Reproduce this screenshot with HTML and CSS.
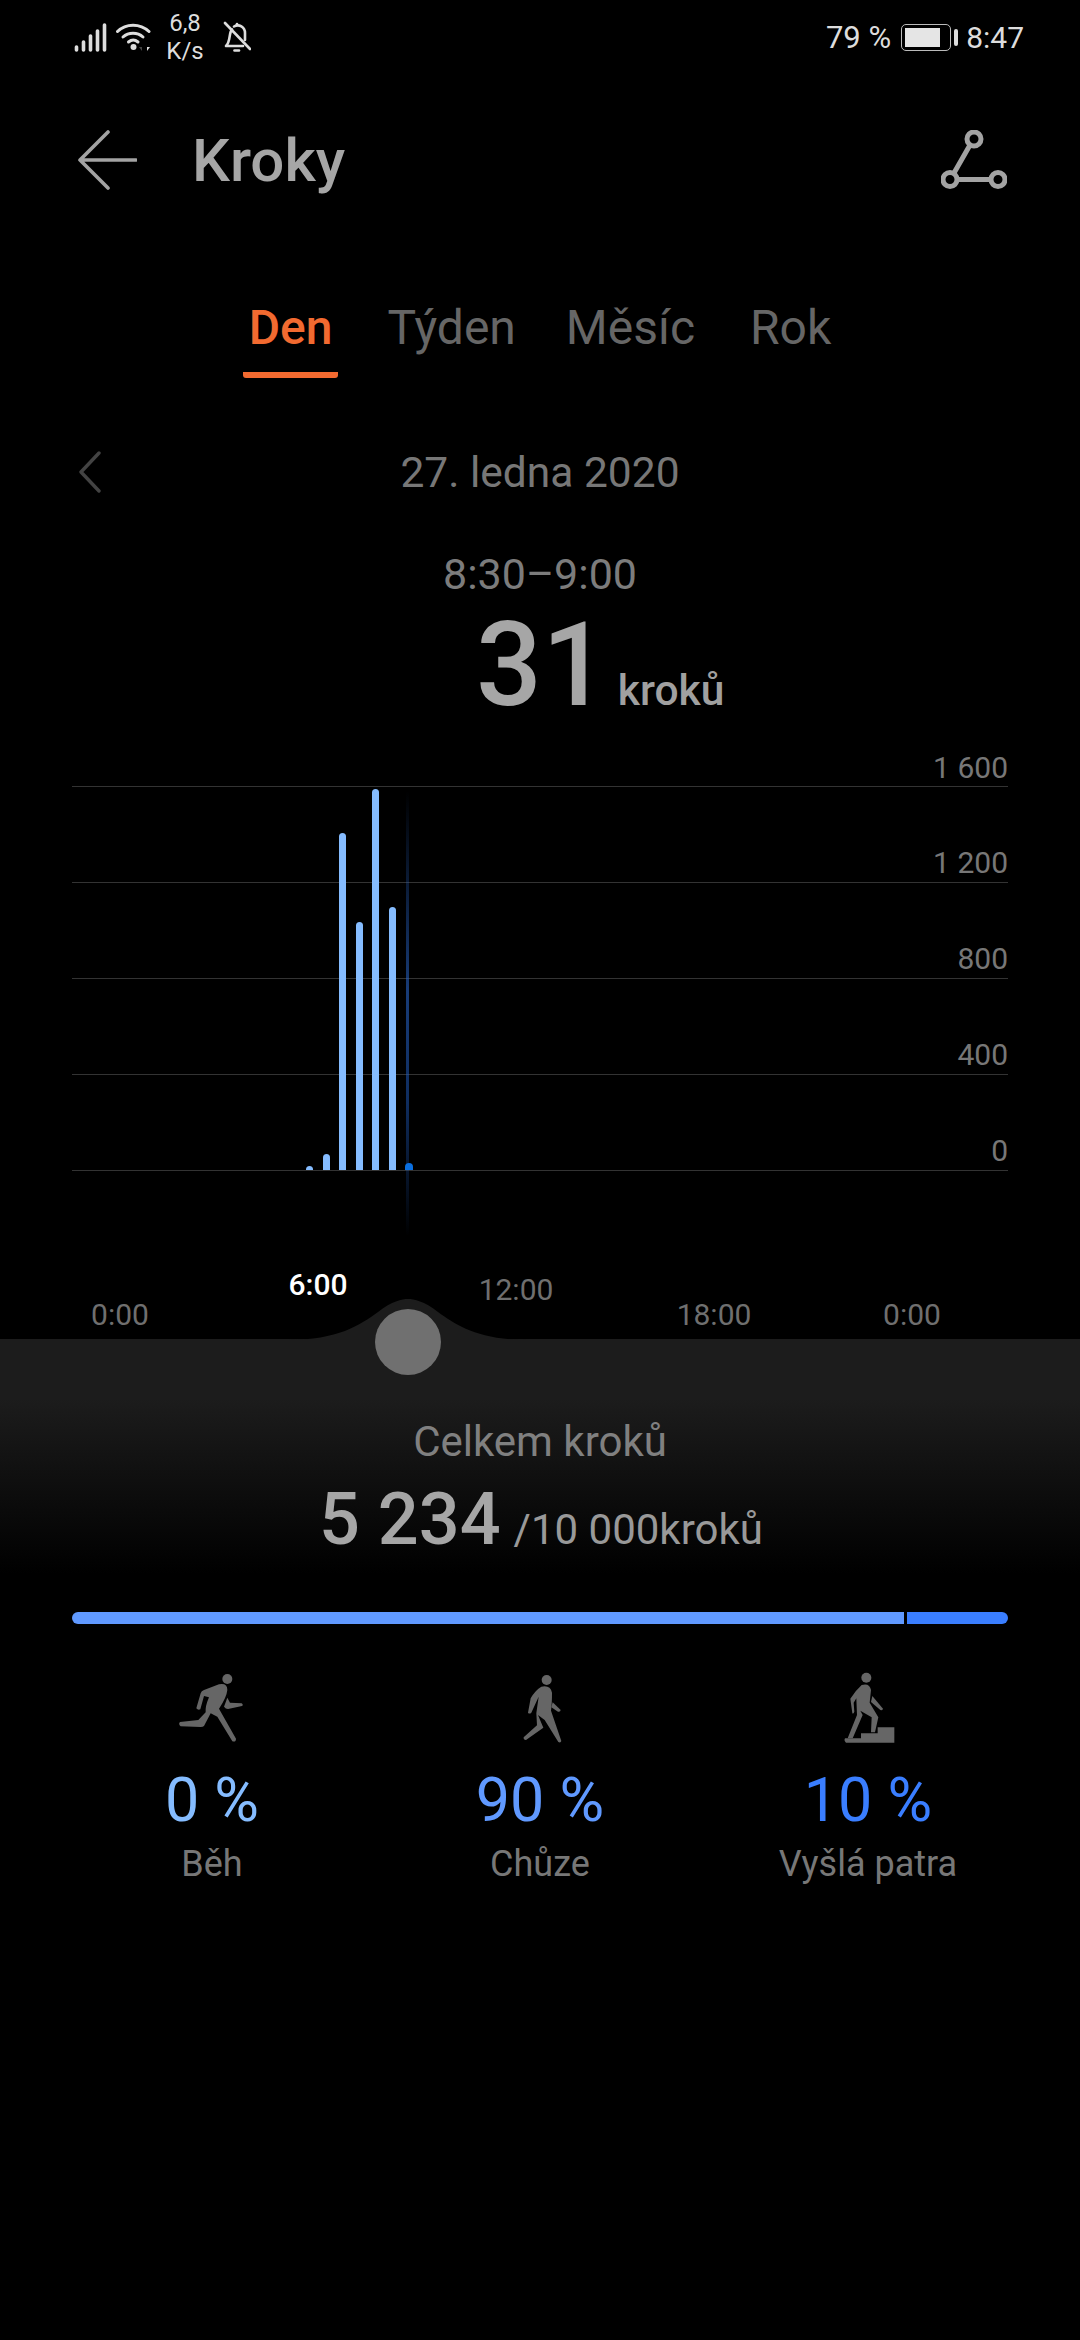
FILE: index.html
```html
<!DOCTYPE html>
<html lang="cs">
<head>
  <meta charset="UTF-8">
  <meta name="viewport" content="width=device-width, initial-scale=1.0">
  <title>Kroky</title>
  <link rel="stylesheet" href="styles.css">
</head>
<body>
  <!-- Status bar -->
  <div class="status-bar">
    <div class="status-left">
      <svg class="icon-signal" width="34" height="32" viewBox="0 0 34 32">
        <g fill="none" stroke="#ddd" stroke-width="3.6" stroke-linecap="round">
          <path d="M2.5 29v-3"/><path d="M9.5 29v-8"/><path d="M16.5 29v-14"/><path d="M23.5 29v-19"/><path d="M30.5 29v-25"/>
        </g>
      </svg>
      <svg class="icon-wifi" width="36" height="32" viewBox="0 0 36 32">
        <g fill="none" stroke="#ddd" stroke-width="3" stroke-linecap="round">
          <path d="M1.5 10.5C10 2 24 2 33 10.5"/>
          <path d="M7 16C12.500 11 21.500 11 27 16"/>
          <path d="M12.500 21C15.500 18.500 19 18.500 22 21"/>
        </g>
        <circle cx="17.500" cy="26" r="3" fill="#ddd"/>
        <path d="M31 21v5h3l-3 4z" fill="#ddd"/>
        <path d="M26 21v5h-3l3 4z" fill="#444"/>
      </svg>
      <div class="net-speed"><span>6,8</span><span>K/s</span></div>
      <svg class="icon-bell" width="28" height="32" viewBox="0 0 28 32">
        <g fill="none" stroke="#ddd" stroke-width="2.600" stroke-linecap="round" stroke-linejoin="round">
          <path d="M9 8.500C5.500 12 8 20 3 25H20"/>
          <path d="M11 5.500C16 2.500 22 6 22 12V19"/>
          <path d="M14 4V3"/>
          <path d="M2 2L27 28"/>
          <path d="M11.500 29.500H16"/>
        </g>
      </svg>
    </div>
    <div class="status-right">
      <span class="battery-text">79 %</span>
      <div class="battery"><div class="battery-level"></div></div>
      <div class="battery-nub"></div>
      <span class="clock">8:47</span>
    </div>
  </div>

  <!-- Title -->
  <div class="title-bar">
    <svg width="60" height="62" viewBox="0 0 60 62">
      <path d="M31 3L3 31L31 59M3 31H59" fill="none" stroke="#a3a3a3" stroke-width="3.600" stroke-linecap="round" stroke-linejoin="round"/>
    </svg>
    <h1 class="title">Kroky</h1>
    <svg class="icon-route" width="66" height="60" viewBox="0 0 66 60">
      <g fill="none" stroke="#a3a3a3" stroke-width="5">
        <circle cx="33" cy="9" r="7"/>
        <circle cx="9" cy="49.500" r="7"/>
        <circle cx="57" cy="49.500" r="7"/>
        <path d="M29 15L13 43M16 49.500H50"/>
      </g>
    </svg>
  </div>

  <!-- Tabs -->
  <div class="tabs">
    <div class="tab active">Den</div>
    <div class="tab">Týden</div>
    <div class="tab month">Měsíc</div>
    <div class="tab">Rok</div>
  </div>

  <div class="date-row">
    <svg width="26" height="42" viewBox="0 0 26 42">
      <path d="M22 2L4 21L22 40" fill="none" stroke="#434343" stroke-width="3.400" stroke-linecap="round" stroke-linejoin="round"/>
    </svg>
    <div class="date">27. ledna 2020</div>
  </div>

  <div class="range">8:30–9:00</div>
  <div class="steps"><span class="steps-num">31</span><span class="steps-unit">kroků</span></div>

  <!-- Chart -->
  <div class="chart">
    <div class="grid-row first">1 600</div>
    <div class="grid-row">1 200</div>
    <div class="grid-row">800</div>
    <div class="grid-row">400</div>
    <div class="grid-row">0</div>
    <div class="cursor-line"></div>
    <div class="bars">
      <div class="bar" style="height:4px"></div>
      <div class="bar" style="height:16px"></div>
      <div class="bar" style="height:337px"></div>
      <div class="bar" style="height:248px"></div>
      <div class="bar" style="height:381px"></div>
      <div class="bar" style="height:263px"></div>
      <div class="bar now" style="height:7px"></div>
    </div>
  </div>

  <div class="axis">
    <span>0:00</span>
    <span class="raised current">6:00</span>
    <span class="raised">12:00</span>
    <span>18:00</span>
    <span>0:00</span>
  </div>

  <!-- Bottom panel -->
  <div class="panel">
    <svg class="bump" width="240" height="44" viewBox="0 0 240 44">
      <path d="M0 44C50 44 72 29 90 16C104 5 114 3 120 3C126 3 136 5 150 16C168 29 190 44 240 44Z" fill="#1c1c1c"/>
    </svg>
    <div class="thumb"></div>

    <div class="total-label">Celkem kroků</div>
    <div class="total"><span class="total-num">5 234</span><span class="total-goal">/10 000kroků</span></div>

    <div class="progress">
      <div class="progress-walk"></div>
      <div class="progress-climb"></div>
    </div>

    <div class="stats">
      <div class="stat">
        <svg width="130" height="100" viewBox="-36 0 390 300">
          <circle cx="205" cy="57" r="15" fill="#666"/>
          <path fill="#666" d="M112 145L125 100Q127 93 135 90L180 73Q205 68 205 90Q203 112 180 146L231 236Q231 247 220 244L175 170L155 160L135 198Q132 201 125 201L65 199Q57 192 63 186L118 180L140 157Q138 140 150 112L135 108L124 148Q117 152 112 145Z"/>
          <path fill="#666" d="M205 113L213 128L248 130Q254 135 249 138L207 147Q200 147 195 140Z"/>
        </svg>
        <div class="stat-value run">0 %</div>
        <div class="stat-label">Běh</div>
      </div>
      <div class="stat">
        <svg width="100" height="100" viewBox="-36 0 300 300">
          <circle cx="134" cy="60" r="15" fill="#666"/>
          <path fill="#666" d="M78 158L86 115Q100 90 118 80Q145 74 150 98Q150 130 147 152L178 243Q176 250 169 246L128 180L108 165L124 203L72 240Q64 240 65 232L105 196L103 160L110 110L88 158Q82 163 78 158Z"/>
          <path fill="#666" d="M152 127L176 150Q175 157 168 155L148 142Z"/>
        </svg>
        <div class="stat-value walk">90 %</div>
        <div class="stat-label">Chůze</div>
      </div>
      <div class="stat">
        <svg width="100" height="100" viewBox="-9 0 300 300">
          <circle cx="136" cy="53" r="15" fill="#666"/>
          <path fill="#666" d="M94 160L88 116Q105 90 122 75Q146 68 150 90L146 128L172 172L162 217H150L152 172L118 152L125 165L95 235H80L108 165L106 115L98 128L100 155Q97 163 94 160Z"/>
          <path fill="#666" d="M154 108L186 146Q184 152 178 150L150 126Z"/>
          <path fill="#666" d="M72 235H120V220H170V202H220V248H75Q68 242 72 235Z"/>
        </svg>
        <div class="stat-value climb">10 %</div>
        <div class="stat-label">Vyšlá patra</div>
      </div>
    </div>
  </div>
</body>
</html>
```

FILE: styles.css
```css
body {
  margin: 0;
  height: 2340px;
  overflow: hidden;
  background: #000;
  font-family: Roboto, "Noto Sans", sans-serif;
  color: #777;
}

svg {
  display: block;
  flex-shrink: 0;
}

.status-bar {
  display: flex;
  justify-content: space-between;
  align-items: center;
  height: 74px;
  padding: 0 56px 0 74px;
  color: #ddd;
}

.status-left, .status-right {
  display: flex;
  align-items: center;
}

.icon-wifi {
  margin-left: 8px;
}

.net-speed {
  display: flex;
  flex-direction: column;
  align-items: center;
  width: 36px;
  margin-left: 15px;
  font-size: 24px;
  line-height: 28px;
}

.icon-bell {
  margin-left: 20px;
}

.battery-text, .clock {
  font-size: 31px;
}

.clock {
  margin-left: 8px;
  font-size: 30px;
}

.battery {
  width: 50px;
  height: 27px;
  margin-left: 10px;
  padding: 3px;
  box-sizing: border-box;
  border: 1px solid #bbb;
  border-radius: 5px;
}

.battery-level {
  width: 35px;
  height: 100%;
  background: #e5e5e5;
}

.battery-nub {
  width: 4px;
  height: 17px;
  margin-left: 3px;
  border-radius: 2px;
  background: #ddd;
}

.title-bar {
  display: flex;
  align-items: center;
  height: 172px;
  padding: 0 73px 0 77px;
}

.title {
  flex: 1;
  margin: 0 0 0 55px;
  font-size: 60px;
  font-weight: 500;
  color: #a6a6a6;
}

.tabs {
  display: flex;
  justify-content: center;
  gap: 43px;
  margin-top: 44px;
}

.tab {
  height: 88px;
  padding: 0 6px;
  box-sizing: border-box;
  font-size: 48px;
  line-height: 76px;
  color: #666;
}

.tab.month {
  margin-left: -5px;
}

.tab.active {
  font-weight: 500;
  color: #f26a30;
  border-bottom: 6px solid #f26a30;
  border-radius: 3px;
}

.date-row {
  display: grid;
  grid-template-columns: 1fr auto 1fr;
  align-items: center;
  height: 50px;
  margin-top: 69px;
  padding: 0 72px;
}

.date-row svg {
  margin-left: 5px;
}

.date {
  font-size: 42.500px;
  color: #777;
}

.range {
  margin-top: 52px;
  font-size: 43px;
  line-height: 50px;
  text-align: center;
  color: #7c7c7c;
}

.steps {
  display: flex;
  align-items: baseline;
  height: 100px;
  margin-top: 16px;
  padding-left: 476px;
  line-height: 100px;
}

.steps-num {
  font-size: 116px;
  font-weight: 500;
  color: #a6a6a6;
}

.steps-unit {
  margin-left: 10px;
  font-size: 42.500px;
  font-weight: 500;
  color: #a0a0a0;
}

.chart {
  position: relative;
  margin: 32px 72px 0;
}

.grid-row {
  height: 96px;
  box-sizing: border-box;
  padding-top: 58px;
  border-bottom: 1px solid #333;
  font-size: 30px;
  line-height: 36px;
  text-align: right;
  color: #777;
}

.grid-row.first {
  height: 40px;
  padding-top: 3px;
}

.cursor-line {
  position: absolute;
  left: 334px;
  top: 44px;
  width: 3px;
  height: 445px;
  background: linear-gradient(to bottom, rgba(30, 90, 190, 0), rgba(40, 100, 200, 0.6) 45%, rgba(30, 90, 190, 0.5) 70%, rgba(30, 90, 190, 0));
}

.bars {
  position: absolute;
  left: 234px;
  bottom: 1px;
  display: flex;
  align-items: flex-end;
  gap: 9.500px;
}

.bar {
  width: 7px;
  border-radius: 4px 4px 0 0;
  background: #85bcff;
}

.bar.now {
  width: 8px;
  background: #0a6fe0;
}

.axis {
  display: grid;
  grid-template-columns: repeat(5, 198px);
  align-items: end;
  height: 74px;
  margin-top: 94px;
  padding-left: 21px;
  font-size: 30px;
  line-height: 36px;
  text-align: center;
  color: #6f6f6f;
}

.axis span {
  margin-bottom: 6px;
}

.axis .raised {
  margin-bottom: 31px;
}

.axis .current {
  margin-bottom: 36px;
  font-weight: 500;
  color: #fff;
}

.panel {
  position: relative;
  height: 700px;
  padding-top: 1px;
  background: linear-gradient(to bottom, #1c1c1c 60px, #000 235px);
}

.bump {
  position: absolute;
  left: 288px;
  top: -43px;
}

.thumb {
  position: absolute;
  left: 375px;
  top: -30px;
  width: 66px;
  height: 66px;
  border-radius: 50%;
  background: #707070;
}

.total-label {
  margin-top: 77px;
  font-size: 42px;
  line-height: 50px;
  text-align: center;
  color: #808080;
}

.total {
  display: flex;
  align-items: baseline;
  height: 84px;
  margin-top: 11px;
  padding-left: 319px;
  line-height: 84px;
}

.total-num {
  font-size: 72px;
  font-weight: 500;
  color: #a6a6a6;
}

.total-goal {
  margin-left: 13px;
  font-size: 42px;
  color: #999;
}

.progress {
  display: flex;
  gap: 3px;
  height: 12px;
  margin: 50px 72px 0;
}

.progress-walk {
  flex: 1;
  border-radius: 6px 0 0 6px;
  background: #6099ff;
}

.progress-climb {
  width: 101px;
  border-radius: 0 6px 6px 0;
  background: #3a7eff;
}

.stats {
  display: grid;
  grid-template-columns: 328px 328px 328px;
  margin-top: 36px;
  padding-left: 48px;
}

.stat {
  display: flex;
  flex-direction: column;
  align-items: center;
}

.stat-value {
  margin-top: 6px;
  font-size: 61px;
  line-height: 68px;
}

.stat-value.run {
  color: #85bcff;
}

.stat-value.walk {
  color: #6099ff;
}

.stat-value.climb {
  color: #3a7eff;
}

.stat-label {
  margin-top: 8px;
  font-size: 36px;
  line-height: 44px;
  color: #777;
}
```
